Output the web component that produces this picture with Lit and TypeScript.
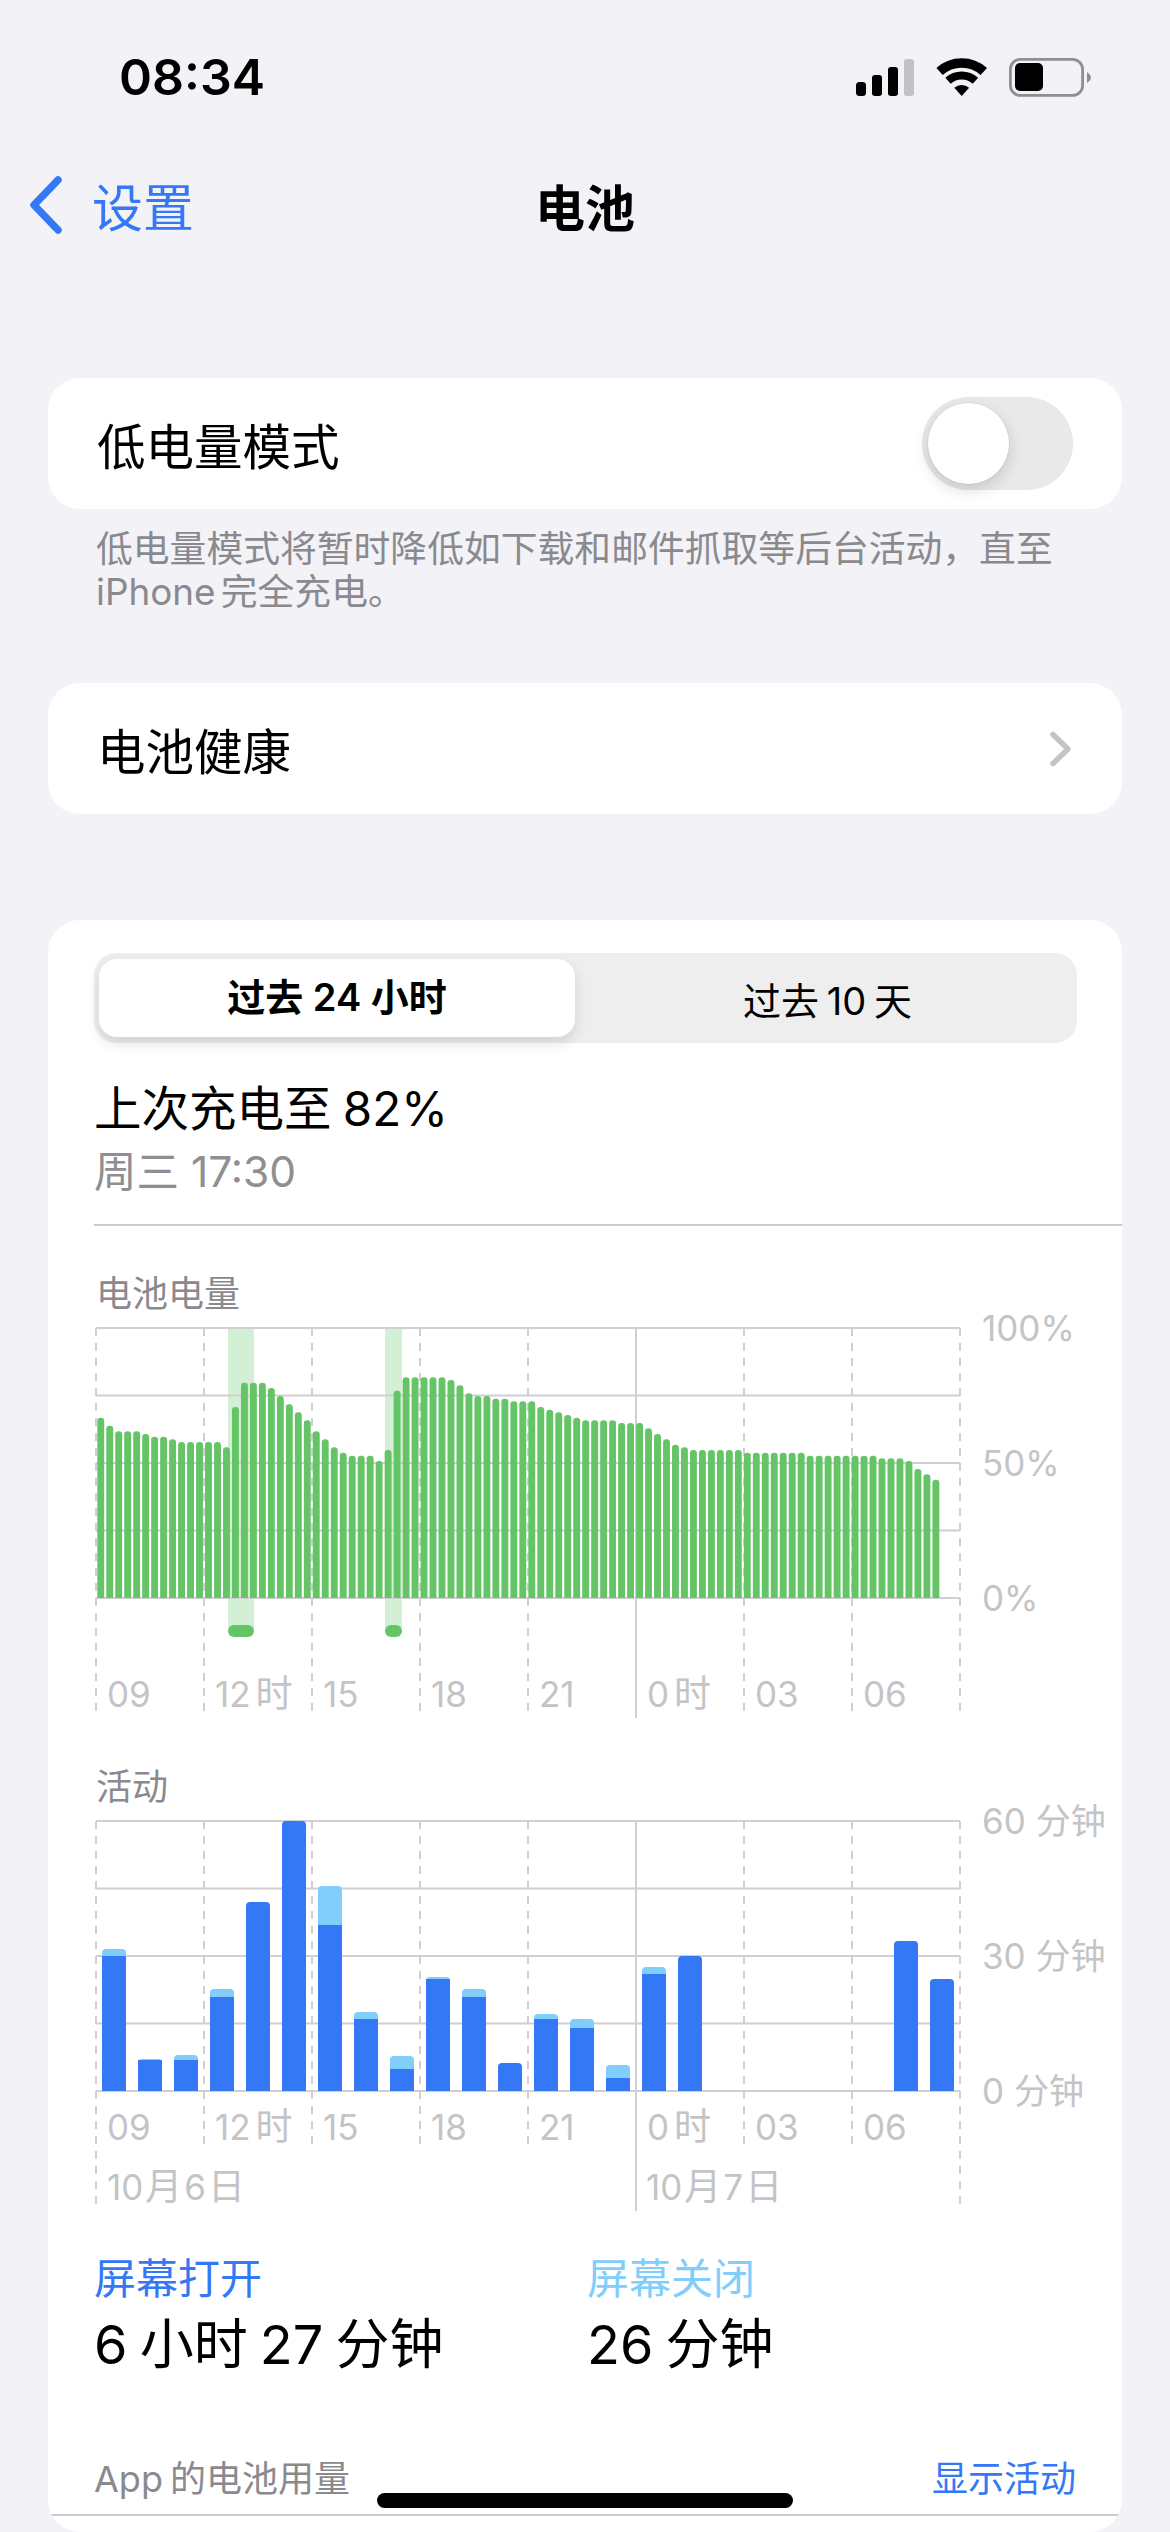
import { LitElement, html, css, svg } from "lit";
import { customElement } from "lit/decorators.js";

const GX = 2; // svg x of the first vertical grid line (page x 96, svg starts at 94)
const PITCH_H = 108;
const TOP = 24; // svg y of the 100% line in both charts

const hourLabels: [string, string][] = [
  ["09", ""], ["12", "时"], ["15", ""], ["18", ""], ["21", ""], ["0", "时"], ["03", ""], ["06", ""],
];

const greenTops = [
  476, 500, 517, 517, 517, 525, 533, 533, 541, 549, 549, 549, 549, 549, 565, 444, 371, 371, 371, 387, 411, 436, 460, 484,
  517, 541, 565, 581, 590, 590, 590, 606, 573, 395, 355, 355, 355, 355, 355, 363, 379, 403, 411, 411, 419, 419, 427, 427,
  427, 444, 452, 460, 468, 476, 484, 484, 484, 484, 492, 492, 492, 508, 525, 541, 557, 565, 573, 573, 573, 573, 573, 573,
  581, 581, 581, 581, 581, 581, 581, 590, 590, 590, 590, 590, 590, 590, 590, 598, 598, 598, 606, 630, 646, 662,
];

// [light top, dark top] of each hour column, in px above the base, null for an empty hour
const activity: ([number, number] | null)[] = [
  [142, 135], [32, 31], [36, 31], [102, 94], [189, 189], [270, 270], [205, 166], [79, 72], [35, 22], [114, 112], [102, 94], [28, 28],
  [77, 72], [72, 63], [26, 13], [124, 117], [135, 135], null, null, null, null, null, [150, 150], [112, 112],
];

const topRounded = (x: number, y: number, w: number, base: number, r: number) =>
  `M${x} ${base}V${y + r}Q${x} ${y} ${x + r} ${y}H${x + w - r}Q${x + w} ${y} ${x + w} ${y + r}V${base}Z`;

function grid(ends: number[], labelY: number) {
  return svg`
    ${[0, 1, 2, 3, 4].map((i) => svg`<line class="h" x1=${GX} x2=${GX + 864} y1=${TOP + i * 67.5} y2=${TOP + i * 67.5}></line>`)}
    ${ends.map((end, i) =>
      i === 5
        ? svg`<line class="v" x1=${GX + i * PITCH_H} x2=${GX + i * PITCH_H} y1=${TOP} y2=${TOP + 390}></line>`
        : svg`<line class="v dash" x1=${GX + i * PITCH_H} x2=${GX + i * PITCH_H} y1=${TOP} y2=${TOP + end}></line>`
    )}
    ${hourLabels.map(
      ([n, u], i) =>
        svg`<text class="lab" x=${GX + i * PITCH_H + 11} y=${labelY}>${n}${u ? svg`<tspan dx="5" class="cjk">${u}</tspan>` : null}</text>`
    )}
  `;
}

@customElement("app-root")
export class AppRoot extends LitElement {
  static styles = css`
    :host {
      display: flex;
      flex-direction: column;
      position: relative;
      width: 1170px;
      height: 2532px;
      overflow: hidden;
      background: #f2f2f7;
      color: #000;
      font-family: "Inter", "Noto Sans CJK SC", sans-serif;
    }
    .status {
      height: 154px;
      flex: none;
      display: flex;
      align-items: center;
      justify-content: space-between;
      padding: 0 79px 0 119px;
      box-sizing: border-box;
    }
    .time {
      font-size: 50px;
      font-weight: 600;
    }
    .status-icons {
      display: block;
      margin-top: 2px;
    }
    .nav {
      height: 102px;
      flex: none;
      display: grid;
      grid-template-columns: 1fr auto 1fr;
      align-items: center;
      padding: 0 28px;
    }
    .back {
      display: flex;
      align-items: center;
      gap: 28px;
      color: #3478f6;
      font-size: 51px;
    }
    .back svg {
      display: block;
    }
    .title {
      font-size: 50px;
      font-weight: 600;
    }
    .card {
      flex: none;
      margin: 0 48px;
      background: #fff;
      border-radius: 32px;
    }
    .row {
      height: 131px;
      box-sizing: border-box;
      display: flex;
      align-items: center;
      justify-content: space-between;
      padding: 0 49px;
      font-size: 48.5px;
    }
    .low {
      margin-top: 122px;
    }
    .switch {
      width: 151px;
      height: 93px;
      border-radius: 47px;
      background: #e9e9ea;
      display: flex;
      align-items: center;
      padding-left: 6px;
      box-sizing: border-box;
    }
    .knob {
      width: 81px;
      height: 81px;
      border-radius: 50%;
      background: #fff;
      box-shadow: 0 0 0 1px rgba(0, 0, 0, 0.04), 0 6px 16px rgba(0, 0, 0, 0.15);
    }
    .note {
      margin: 18px 70px 0 96px;
      font-size: 36.8px;
      line-height: 43px;
      color: #8a8a8e;
      white-space: nowrap;
      word-spacing: -5px;
    }
    .health {
      margin-top: 70px;
    }
    .stats {
      margin-top: 106px;
      flex: 1;
      padding-top: 33px;
      overflow: hidden;
    }
    .segment {
      margin: 0 45px 0 46px;
      height: 90px;
      box-sizing: border-box;
      padding: 6px 5px;
      border-radius: 22px;
      background: #eeeeef;
      display: grid;
      grid-template-columns: 476px 1fr;
      font-size: 38px;
      align-items: center;
      text-align: center;
    }
    .seg-on {
      height: 78px;
      line-height: 76px;
      background: #fff;
      border-radius: 18px;
      font-weight: 600;
      box-shadow: 0 6px 14px rgba(0, 0, 0, 0.12);
    }
    .seg-off {
      padding-left: 8px;
      word-spacing: -3px;
    }
    .charge {
      margin: 36px 0 0 46px;
      font-size: 47.5px;
      line-height: 60px;
      word-spacing: -2px;
    }
    .when {
      margin: 5px 0 0 46px;
      font-size: 42.5px;
      line-height: 56px;
      color: #8e8e93;
    }
    .rule {
      height: 2px;
      background: #cbcbcf;
    }
    .stats > .rule.first {
      margin: 24px 0 0 46px;
    }
    .chart-title {
      margin: 58px 0 0 48px;
      font-size: 36px;
      line-height: 20px;
      color: #8a8a8e;
    }
    .chart {
      display: block;
      margin-left: 46px;
    }
    .h,
    .v {
      stroke: #d0d0d3;
      stroke-width: 2;
    }
    .dash {
      stroke-dasharray: 8 7;
    }
    .lab {
      font-size: 35px;
      fill: #c4c4c6;
      font-family: "Inter", "Noto Sans CJK SC", sans-serif;
    }
    .cjk {
      font-size: 37px;
    }
    .green {
      fill: #65c466;
    }
    .pale {
      fill: #d3efd6;
    }
    .dark {
      fill: #3478f6;
    }
    .light {
      fill: #81cefa;
    }
    .act-title {
      margin-top: 0;
    }
    .totals {
      margin: 40px 0 0 46px;
      display: grid;
      grid-template-columns: 493px 1fr;
    }
    .tot-label {
      font-size: 42px;
      line-height: 50px;
    }
    .on {
      color: #3478f6;
    }
    .off {
      color: #81cefa;
    }
    .tot-value {
      margin-top: 8px;
      font-size: 54px;
      line-height: 66px;
      word-spacing: -3px;
    }
    .usage {
      margin: 79px 46px 0 46px;
      display: flex;
      justify-content: space-between;
      font-size: 36px;
      line-height: 44px;
      color: #8a8a8e;
      word-spacing: -3px;
    }
    .usage .on {
      color: #3478f6;
    }
    .rule.full {
      margin-top: 13px;
    }
    .home {
      position: absolute;
      left: 377px;
      top: 2493px;
      width: 416px;
      height: 15px;
      border-radius: 8px;
      background: #000;
    }
  `;

  render() {
    return html`
      <div class="status">
        <div class="time">08:34</div>
        <svg class="status-icons" width="235" height="40" viewBox="0 0 235 40">
          <rect x="0" y="24" width="10" height="14" rx="3.5" fill="#000"></rect>
          <rect x="16" y="17" width="10" height="21" rx="3" fill="#000"></rect>
          <rect x="32" y="9" width="10" height="29" rx="3" fill="#000"></rect>
          <rect x="48" y="1" width="10" height="37" rx="3" fill="#c2c2c6"></rect>
          <path d="M105.7 38 L98.3 29.8 A11 11 0 0 1 113.1 29.8 Z" fill="#000"></path>
          <path d="M92 22.8 A20.5 20.5 0 0 1 119.4 22.8" fill="none" stroke="#000" stroke-width="8"></path>
          <path d="M83.6 13.5 A33 33 0 0 1 127.8 13.5" fill="none" stroke="#000" stroke-width="9.5"></path>
          <rect x="154.4" y="1.4" width="72.2" height="36" rx="10" fill="none" stroke="#8e8e93" stroke-width="2.8"></rect>
          <rect x="159" y="5" width="28" height="28" rx="5" fill="#000"></rect>
          <path d="M231 14 Q235 17 235 19.5 Q235 22 231 25 Z" fill="#8e8e93"></path>
        </svg>
      </div>
      <div class="nav">
        <div class="back">
          <svg width="36" height="60" viewBox="0 0 36 60">
            <path d="M30 5 L6 30 L30 55" fill="none" stroke="#3478f6" stroke-width="7.5" stroke-linecap="round" stroke-linejoin="round"></path>
          </svg>
          <span>设置</span>
        </div>
        <div class="title">电池</div>
        <div></div>
      </div>
      <div class="card low row">
        <span>低电量模式</span>
        <div class="switch"><div class="knob"></div></div>
      </div>
      <div class="note">低电量模式将暂时降低如下载和邮件抓取等后台活动，直至<br />iPhone 完全充电。</div>
      <div class="card health row">
        <span>电池健康</span>
        <svg width="24" height="36" viewBox="0 0 24 36">
          <path d="M4 3.5 L19 18 L4 32.5" fill="none" stroke="#c4c4c7" stroke-width="5.5" stroke-linecap="round" stroke-linejoin="round"></path>
        </svg>
      </div>
      <div class="card stats">
        <div class="segment">
          <div class="seg-on">过去 24 小时</div>
          <div class="seg-off">过去 10 天</div>
        </div>
        <div class="charge">上次充电至 82%</div>
        <div class="when">周三 17:30</div>
        <div class="rule first"></div>
        <div class="chart-title">电池电量</div>
        ${this.battery()}
        <div class="chart-title act-title">活动</div>
        ${this.activity()}
        <div class="totals">
          <div class="tot-label on">屏幕打开</div>
          <div class="tot-label off">屏幕关闭</div>
          <div class="tot-value">6 小时 27 分钟</div>
          <div class="tot-value">26 分钟</div>
        </div>
        <div class="usage"><span>App 的电池用量</span><span class="on">显示活动</span></div>
        <div class="rule full"></div>
      </div>
      <div class="home"></div>
    `;
  }

  battery() {
    const base = TOP + 270;
    const ends = Array(9).fill(384);
    return html`<svg class="chart" width="1026" height="473" viewBox="0 0 1026 473">
      <rect class="pale" x="134" y=${TOP} width="26" height="300"></rect>
      <rect class="pale" x="291" y=${TOP} width="17" height="300"></rect>
      ${grid(ends, TOP + 379)}
      ${greenTops.map((t, i) => {
        const h = (1017 - t) / 3;
        return svg`<path class="green" d=${topRounded(3.3 + i * 8.98, base - h, 6.9, base, 3.2)}></path>`;
      })}
      <rect class="green" x="134" y=${TOP + 297} width="26" height="12" rx="6"></rect>
      <rect class="green" x="291" y=${TOP + 297} width="17" height="12" rx="6"></rect>
      <text class="lab" x="888" y=${TOP + 12.5}>100%</text>
      <text class="lab" x="888" y=${TOP + 147.5}>50%</text>
      <text class="lab" x="888" y=${TOP + 282.5}>0%</text>
    </svg>`;
  }

  activity() {
    const base = TOP + 270;
    const ends = [383, 325, 325, 325, 325, 0, 325, 325, 383];
    return html`<svg class="chart" width="1026" height="417" viewBox="0 0 1026 417">
      ${grid(ends, TOP + 319)}
      ${activity.map((a, i) => {
        if (!a) return null;
        const x = 8 + i * 36;
        return svg`
          ${a[0] > a[1] ? svg`<path class="light" d=${topRounded(x, base - a[0], 24, base - a[1] + 1, 4)}></path>` : null}
          ${a[0] > a[1]
            ? svg`<rect class="dark" x=${x} y=${base - a[1]} width="24" height=${a[1]}></rect>`
            : svg`<path class="dark" d=${topRounded(x, base - a[1], 24, base, 4)}></path>`}
        `;
      })}
      <text class="lab" x="13" y=${TOP + 379}>10<tspan dx="2" class="cjk">月</tspan><tspan dx="2">6</tspan><tspan dx="2" class="cjk">日</tspan></text>
      <text class="lab" x="552" y=${TOP + 379}>10<tspan dx="2" class="cjk">月</tspan><tspan dx="2">7</tspan><tspan dx="2" class="cjk">日</tspan></text>
      <text class="lab" x="888" y=${TOP + 12.5}>60 分钟</text>
      <text class="lab" x="888" y=${TOP + 147.5}>30 分钟</text>
      <text class="lab" x="888" y=${TOP + 282.5}>0 分钟</text>
    </svg>`;
  }
}
